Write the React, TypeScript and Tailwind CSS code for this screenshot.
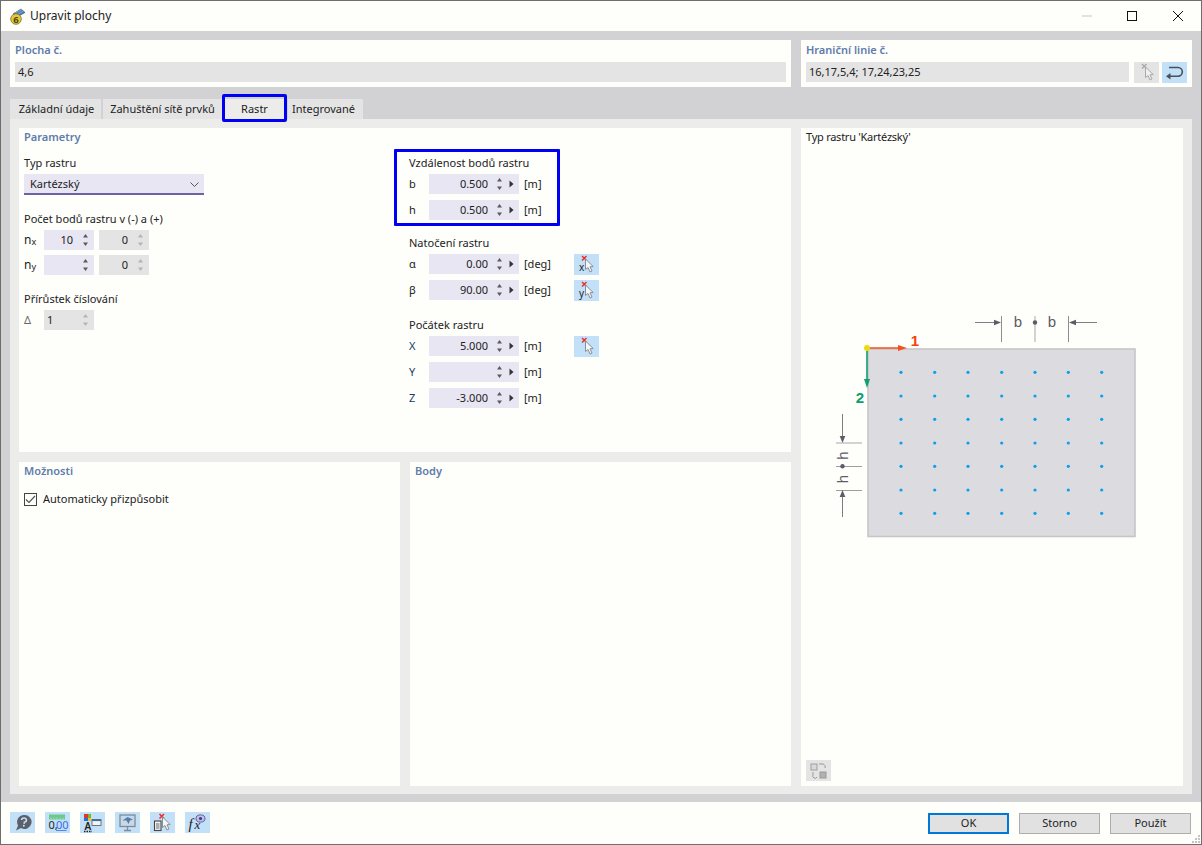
import type { ReactNode } from "react";

const FONT = "font-['Noto_Sans','Open_Sans',sans-serif]";

function SpinArrows({ disabled }: { disabled?: boolean }) {
  const c = disabled ? "#b4b4b4" : "#5a5a5a";
  return (
    <svg width="7" height="14" viewBox="0 0 7 14" className="shrink-0">
      <path d="M3.5 1 L6 4.5 H1 Z" fill={c} />
      <path d="M3.5 13 L6 9.5 H1 Z" fill={c} />
    </svg>
  );
}

function CountField({ value, disabled, leftAlign }: { value?: string; disabled?: boolean; leftAlign?: boolean }) {
  return (
    <div className={`flex h-5 w-[50px] items-center ${disabled ? "bg-[#e4e4e4]" : "bg-[#e8e6f2]"}`}>
      <span className={`w-[29px] text-[#222] ${leftAlign ? "pl-[3px] text-left" : "text-right"}`}>{value}</span>
      <span className="ml-[9px]">
        <SpinArrows disabled={disabled} />
      </span>
    </div>
  );
}

function ValueField({ label, value, unit, blueLabel, action }: {
  label: string;
  value?: string;
  unit: string;
  blueLabel?: boolean;
  action?: ReactNode;
}) {
  return (
    <div className="flex h-5 items-center">
      <span className={`w-5 shrink-0 ${blueLabel ? "text-[#1c3a66]" : "text-[#222]"}`}>{label}</span>
      <div className="flex h-5 w-[90px] shrink-0 items-center bg-[#e8e6f2]">
        <span className="w-[59px] text-right text-[#222]">{value}</span>
        <span className="ml-[8px]">
          <SpinArrows />
        </span>
        <svg width="5" height="8" viewBox="0 0 5 8" className="ml-[6px]">
          <path d="M0.5 0.5 L4.5 4 L0.5 7.5 Z" fill="#333" />
        </svg>
      </div>
      <span className={`pl-[5px] text-[#222] ${action ? "w-[55px] shrink-0" : ""}`}>{unit}</span>
      {action}
    </div>
  );
}

function PickIcon({ letter, gray }: { letter?: string; gray?: boolean }) {
  return (
    <svg width="25" height="21" viewBox="0 0 25 21">
      <path d="M8 2 L12.5 6.5 M12.5 2 L8 6.5" stroke={gray ? "#a8a8a8" : "#ee2a2a"} strokeWidth="1.4" />
      <path
        d="M11.5 5 L11.5 15.5 L14 13.5 L16 18 L18 17 L16 12.8 L19.2 12.5 Z"
        fill={gray ? "#f0f0f0" : "#f6f6f6"}
        stroke={gray ? "#a8a8a8" : "#8a8f96"}
        strokeWidth="1"
      />
      {letter && (
        <text x="5" y="17" fontSize="10" fill="#222" fontFamily="Noto Sans, sans-serif">
          {letter}
        </text>
      )}
    </svg>
  );
}

function IconButton({ children, gray }: { children: ReactNode; gray?: boolean }) {
  return <div className={`flex h-[21px] w-[25px] shrink-0 items-center justify-center ${gray ? "bg-[#e4e4e4]" : "bg-[#c2e0f8]"}`}>{children}</div>;
}

function Heading({ children }: { children: ReactNode }) {
  return <div className="h-[18px] leading-[18px] font-semibold text-[#5f7cab]">{children}</div>;
}

function Label({ children, className = "" }: { children: ReactNode; className?: string }) {
  return <div className={`h-4 leading-4 text-[#222] ${className}`}>{children}</div>;
}

function Diagram() {
  const xs = [901, 934.7, 968, 1001.7, 1035, 1068.3, 1101.7];
  const ys = [372.3, 396, 419.3, 443, 466.3, 490, 513.3];
  const dim = "#5c5c66";
  return (
    <svg width="320" height="240" viewBox="830 310 320 240" className="mt-[164px] ml-[29px] shrink-0">
      <rect x="868" y="349" width="267" height="187.5" fill="#dcdce0" stroke="#c6c6c8" strokeWidth="1.6" />
      {ys.map((y) => xs.map((x) => <circle key={`${x}-${y}`} cx={x} cy={y} r="1.6" fill="#0a9ff0" />))}

      <path d="M975 322.5 H1000" stroke={dim} strokeWidth="0.8" />
      <path d="M1001 322.5 L994 319.7 V325.3 Z" fill={dim} />
      <path d="M1097 322.5 H1070" stroke={dim} strokeWidth="0.8" />
      <path d="M1069 322.5 L1076 319.7 V325.3 Z" fill={dim} />
      <path d="M1001.5 316 V342 M1068.5 316 V342" stroke={dim} strokeWidth="0.7" />
      <path d="M1035 316 V342" stroke="#a8a8ae" strokeWidth="1" />
      <circle cx="1035" cy="322.5" r="2.2" fill={dim} />
      <text x="1018" y="327" textAnchor="middle" fontSize="15" fill={dim} fontFamily="Liberation Sans, sans-serif">b</text>
      <text x="1052" y="327" textAnchor="middle" fontSize="15" fill={dim} fontFamily="Liberation Sans, sans-serif">b</text>

      <path d="M842.5 414 V440" stroke={dim} strokeWidth="0.8" />
      <path d="M842.5 443 L839.7 436 H845.3 Z" fill={dim} />
      <path d="M842.5 517 V492" stroke={dim} strokeWidth="0.8" />
      <path d="M842.5 490 L839.7 497 H845.3 Z" fill={dim} />
      <path d="M836 443 H862" stroke="#a8a8ae" strokeWidth="1" />
      <path d="M836 466.5 H862 M836 490.5 H862" stroke={dim} strokeWidth="0.6" />
      <circle cx="842.5" cy="466.3" r="2.2" fill={dim} />
      <text transform="translate(848 455.5) rotate(-90)" textAnchor="middle" fontSize="15" fill={dim} fontFamily="Liberation Sans, sans-serif">h</text>
      <text transform="translate(848 479) rotate(-90)" textAnchor="middle" fontSize="15" fill={dim} fontFamily="Liberation Sans, sans-serif">h</text>

      <path d="M867 348 H900" stroke="#f4511e" strokeWidth="1.6" />
      <path d="M907 348 L898 345 V351 Z" fill="#f4511e" />
      <path d="M867 348 V382" stroke="#10a070" strokeWidth="1.6" />
      <path d="M867 388 L864 379 H870 Z" fill="#10a070" />
      <circle cx="867" cy="348" r="3" fill="#e8dc10" />
      <text x="915" y="345.5" textAnchor="middle" fontSize="15" fontWeight="700" fill="#f4400e" fontFamily="Liberation Sans, sans-serif">1</text>
      <text x="860" y="403" textAnchor="middle" fontSize="15" fontWeight="700" fill="#08a068" fontFamily="Liberation Sans, sans-serif">2</text>
    </svg>
  );
}

function FooterIcons() {
  return (
    <div className="flex gap-[10px]">
      <IconButton>
        <svg width="20" height="19" viewBox="0 0 20 19">
          <path d="M11 2 A7 7 0 1 1 8 15 L3 17.5 L5 12.5 A7 7 0 0 1 11 2 Z" fill="#5c6068" />
          <path d="M8.6 7 A2.4 2.2 0 1 1 11.4 9.3 L11 10.8" stroke="#c2e0f8" strokeWidth="1.6" fill="none" />
          <circle cx="10.8" cy="12.8" r="1" fill="#c2e0f8" />
        </svg>
      </IconButton>
      <IconButton>
        <svg width="25" height="21" viewBox="0 0 25 21">
          <rect x="4" y="2.5" width="16" height="5" fill="#6cc88c" />
          <path d="M6 7.5 V5.5 M9 7.5 V5.5 M12 7.5 V5.5 M15 7.5 V5.5 M18 7.5 V5.5" stroke="#bfe8cc" strokeWidth="0.7" />
          <text x="3.5" y="17" fontSize="11" fill="#222" fontFamily="Noto Sans, sans-serif">0,</text>
          <text x="11" y="17" fontSize="11" fill="#3a6fe0" fontFamily="Noto Sans, sans-serif">00</text>
          <path d="M11 18.5 H21.5" stroke="#3a6fe0" strokeWidth="0.8" />
        </svg>
      </IconButton>
      <IconButton>
        <svg width="25" height="21" viewBox="0 0 25 21">
          <rect x="4" y="2" width="4" height="4" fill="#d83a2a" />
          <rect x="8" y="2" width="3" height="4" fill="#7ab82a" />
          <rect x="4" y="6" width="4" height="3" fill="#2a6fd8" />
          <rect x="8" y="6" width="3" height="3" fill="#e8c820" />
          <rect x="12" y="7.5" width="9" height="6" fill="#f4f4f4" stroke="#555" strokeWidth="0.8" />
          <path d="M12 8.3 H21" stroke="#3a6fb0" strokeWidth="1.6" />
          <text x="4.5" y="17.5" fontSize="10" fontWeight="600" fill="#222" fontFamily="Noto Sans, sans-serif">A</text>
          <path d="M4 19.5 H12" stroke="#222" strokeWidth="1.4" strokeDasharray="1.5 1" />
        </svg>
      </IconButton>
      <IconButton>
        <svg width="25" height="21" viewBox="0 0 25 21">
          <rect x="5" y="3" width="15" height="11.5" fill="#c9d8e6" stroke="#7d8c98" strokeWidth="1.3" />
          <path d="M7.5 8.5 L12.5 5 L18 7.5 L15 8.5 L13.5 12 L11.5 8.5 Z" fill="#4f7fae" />
          <path d="M12.5 15 V18 M9 18.5 H16" stroke="#7d8c98" strokeWidth="1.3" />
        </svg>
      </IconButton>
      <IconButton>
        <svg width="25" height="21" viewBox="0 0 25 21">
          <rect x="4.5" y="9" width="6.5" height="9.5" fill="#f4f4f4" stroke="#444" strokeWidth="1.1" />
          <path d="M6 12 H9.5 M6 14 H9.5 M6 16 H9.5" stroke="#444" strokeWidth="0.8" />
          <path d="M9.5 2 L14 6.5 M14 2 L9.5 6.5" stroke="#ee2a2a" strokeWidth="1.5" />
          <path d="M12.5 5 L12.5 15.5 L15 13.5 L17 18 L19 17 L17 12.8 L20.2 12.5 Z" fill="#f6f6f6" stroke="#8a8f96" strokeWidth="1" />
        </svg>
      </IconButton>
      <IconButton>
        <svg width="25" height="21" viewBox="0 0 25 21">
          <text x="3.5" y="17" fontSize="15" fontStyle="italic" fontFamily="Liberation Serif, serif" fill="#222">f</text>
          <text x="9.5" y="17" fontSize="13" fontStyle="italic" fontFamily="Liberation Serif, serif" fill="#222">x</text>
          <ellipse cx="15.5" cy="6.5" rx="4.5" ry="3.6" fill="#c3bfe4" stroke="#5a5090" strokeWidth="0.9" />
          <circle cx="15.5" cy="6.5" r="1.6" fill="#2a3f90" />
        </svg>
      </IconButton>
    </div>
  );
}

export default function App() {
  return (
    <div className={`flex h-[845px] w-[1202px] flex-col overflow-hidden border border-[#6e6e6e] bg-[#fefefb] text-[11px] ${FONT}`}>
      <div className="flex h-[30px] shrink-0 items-center pr-[18px] pl-[8px]">
        <svg width="17" height="17" viewBox="0 0 17 17">
          <path d="M4 6 L12 1 L16 4.5 L8 9 Z" fill="#4f7fb5" stroke="#2f4a66" strokeWidth="0.6" />
          <path d="M6 5 L13 1.5 M8 6.5 L14.5 3" stroke="#a8c4e0" strokeWidth="0.6" />
          <circle cx="7" cy="11" r="5.3" fill="#e6c832" stroke="#6d6420" strokeWidth="0.7" />
          <text x="7" y="14.5" textAnchor="middle" fontSize="9.5" fontWeight="700" fill="#4a4418" fontFamily="Noto Sans, sans-serif">6</text>
        </svg>
        <span className="ml-[4px] flex-1 text-[12px] whitespace-nowrap text-[#222]">Upravit plochy</span>
        <svg width="10" height="2" viewBox="0 0 10 2">
          <path d="M0 1 H10" stroke="#c4c4c4" />
        </svg>
        <div className="ml-[35px] size-[10px] border border-[#111]" />
        <svg width="10" height="10" viewBox="0 0 10 10" className="ml-[36px]">
          <path d="M0 0 L10 10 M10 0 L0 10" stroke="#111" strokeWidth="1" />
        </svg>
      </div>

      <div className="flex flex-1 flex-col bg-[#d2d2d5] px-[9px] pt-[9px]">
        <div className="flex h-[47px] gap-[10px]">
          <div className="w-[781px] bg-[#fefefb] px-[5px]">
            <div className="h-[22px] pt-[1px]">
              <Heading>Plocha č.</Heading>
            </div>
            <div className="flex h-5 items-center bg-[#e4e4e4] pl-[3px] text-[#222]">4,6</div>
          </div>
          <div className="flex-1 bg-[#fefefb] px-[5px]">
            <div className="h-[22px] pt-[1px]">
              <Heading>Hraniční linie č.</Heading>
            </div>
            <div className="flex h-5 items-center">
              <div className="flex h-5 w-[323px] items-center bg-[#e4e4e4] pl-[3px] text-[#222]">16,17,5,4; 17,24,23,25</div>
              <div className="ml-[5px]">
                <IconButton gray>
                  <PickIcon gray />
                </IconButton>
              </div>
              <div className="ml-[3px]">
                <IconButton>
                  <svg width="25" height="21" viewBox="0 0 25 21">
                    <path d="M7 5.5 H16 A4.3 4.3 0 0 1 16 14.2 H8" stroke="#4a5058" strokeWidth="1.6" fill="none" />
                    <path d="M4 14.2 L8.5 11 V17.4 Z" fill="#4a5058" />
                  </svg>
                </IconButton>
              </div>
            </div>
          </div>
        </div>

        <div className="mt-3 flex h-5 items-end">
          <div className="flex h-5 w-[91px] items-center justify-center bg-[#e4e4e4] pl-[2px] text-[#222]">Základní údaje</div>
          <div className="ml-[2px] flex h-5 w-[119px] items-center justify-center bg-[#e4e4e4] text-[#222]">Zahuštění sítě prvků</div>
          <div className="relative flex h-5 w-[65px] items-center justify-center bg-[#ecedea] text-[#222]">
            Rastr
            <div className="absolute -top-[5px] right-0 -bottom-[3px] left-0 rounded-[2px] border-[3px] border-[#0000f5]" />
          </div>
          <div className="ml-px flex h-5 w-[75px] items-center justify-center bg-[#e4e4e4] pr-[4px] text-[#222]">Integrované</div>
        </div>

        <div className="flex h-[675px] gap-[10px] bg-[#ecedea] pt-[9px] pr-[9px] pb-[8px] pl-[9px]">
          <div className="flex w-[772px] flex-col gap-[10px]">
            <div className="flex h-[324px] bg-[#fefefb] pl-[5px]">
              <div className="w-[370px]">
                <Heading>Parametry</Heading>
                <Label className="mt-[9px]">Typ rastru</Label>
                <div className="mt-[3px] flex h-[21px] w-[180px] items-center justify-between border-b-2 border-[#6d62a6] bg-[#e8e6f2] pt-[2px] pr-[5px] pl-[6px] text-[#222]">
                  Kartézský
                  <svg width="9" height="5" viewBox="0 0 9 5">
                    <path d="M0.5 0.5 L4.5 4.5 L8.5 0.5" stroke="#555" strokeWidth="1" fill="none" />
                  </svg>
                </div>
                <Label className="mt-4">Počet bodů rastru v (-) a (+)</Label>
                <div className="mt-[3px] flex items-center gap-[5px]">
                  <span className="w-[15px] text-[12px] text-[#222]">n<span className="relative top-[1px] text-[9px]">x</span></span>
                  <CountField value="10" />
                  <CountField value="0" disabled />
                </div>
                <div className="mt-[5px] flex items-center gap-[5px]">
                  <span className="w-[15px] text-[12px] text-[#222]">n<span className="relative top-[1px] text-[9px]">y</span></span>
                  <CountField />
                  <CountField value="0" disabled />
                </div>
                <Label className="mt-4">Přírůstek číslování</Label>
                <div className="mt-[3px] flex items-center gap-[5px]">
                  <span className="w-[15px] text-[#666]">Δ</span>
                  <CountField value="1" disabled leftAlign />
                </div>
              </div>
              <div className="pt-[18px]">
                <div className="mt-[3px] flex h-[77px] w-[166px] flex-col rounded-[1px] border-[3px] border-[#0000f5] pt-[3px] pl-3">
                  <Label>Vzdálenost bodů rastru</Label>
                  <div className="mt-[3px] flex flex-col gap-[6px]">
                    <ValueField label="b" value="0.500" unit="[m]" />
                    <ValueField label="h" value="0.500" unit="[m]" />
                  </div>
                </div>
                <div className="pl-[15px]">
                  <Label className="mt-[9px]">Natočení rastru</Label>
                  <div className="mt-[3px] flex flex-col gap-[6px]">
                    <ValueField label="α" value="0.00" unit="[deg]" action={<IconButton><PickIcon letter="x" /></IconButton>} />
                    <ValueField label="β" value="90.00" unit="[deg]" action={<IconButton><PickIcon letter="y" /></IconButton>} />
                  </div>
                  <Label className="mt-[17px]">Počátek rastru</Label>
                  <div className="mt-[3px] flex flex-col gap-[6px]">
                    <ValueField label="X" value="5.000" unit="[m]" blueLabel action={<IconButton><PickIcon /></IconButton>} />
                    <ValueField label="Y" unit="[m]" blueLabel />
                    <ValueField label="Z" value="-3.000" unit="[m]" blueLabel />
                  </div>
                </div>
              </div>
            </div>
            <div className="flex h-[324px] gap-[10px]">
              <div className="w-[381px] bg-[#fefefb] pl-[5px]">
                <Heading>Možnosti</Heading>
                <div className="mt-[11px] flex items-center gap-[6px] text-[#222]">
                  <div className="flex size-[13px] items-center justify-center border border-[#444]">
                    <svg width="11" height="9" viewBox="0 0 11 9">
                      <path d="M1 4.5 L4 7.5 L10 1" stroke="#555" strokeWidth="1.2" fill="none" />
                    </svg>
                  </div>
                  Automaticky přizpůsobit
                </div>
              </div>
              <div className="flex-1 bg-[#fefefb] pl-[5px]">
                <Heading>Body</Heading>
              </div>
            </div>
          </div>
          <div className="flex w-[382px] flex-col bg-[#fefefb]">
            <div className="h-[18px] pl-[5px] leading-[18px] tracking-[-0.25px] text-[#222]">Typ rastru 'Kartézský'</div>
            <Diagram />
            <div className="mt-[210px] ml-[5px]">
              <IconButton gray>
                <svg width="21" height="19" viewBox="0 0 21 19">
                  <rect x="3" y="3" width="6" height="6" fill="#d8d8d8" stroke="#a0a0a0" />
                  <rect x="12" y="11" width="6" height="6" fill="#b0b0b0" stroke="#999" />
                  <path d="M11 3 H15 A3 3 0 0 1 17 7 M5 11 V14 A2 2 0 0 0 9 16" stroke="#999" strokeWidth="1" fill="none" />
                </svg>
              </IconButton>
            </div>
          </div>
        </div>
      </div>

      <div className="relative flex h-[42px] shrink-0 items-start justify-between pt-[10px] pr-[10px] pl-[9px] text-[#222]">
        <FooterIcons />
        <div className="mt-px flex gap-[10px]">
          <div className="flex h-[21px] w-[81px] items-center justify-center border-2 border-[#0078d7] bg-[#e1e1e1]">OK</div>
          <div className="flex h-[21px] w-[81px] items-center justify-center border border-[#adadad] bg-[#e1e1e1]">Storno</div>
          <div className="flex h-[21px] w-[81px] items-center justify-center border border-[#adadad] bg-[#e1e1e1]">Použít</div>
        </div>
        <svg width="8" height="8" viewBox="0 0 8 8" className="absolute right-[1px] bottom-[1px]">
          <path d="M6 0h2v2H6zM3 3h2v2H3zM6 3h2v2H6zM0 6h2v2H0zM3 6h2v2H3zM6 6h2v2H6z" fill="#c4c4c4" />
        </svg>
      </div>
    </div>
  );
}
